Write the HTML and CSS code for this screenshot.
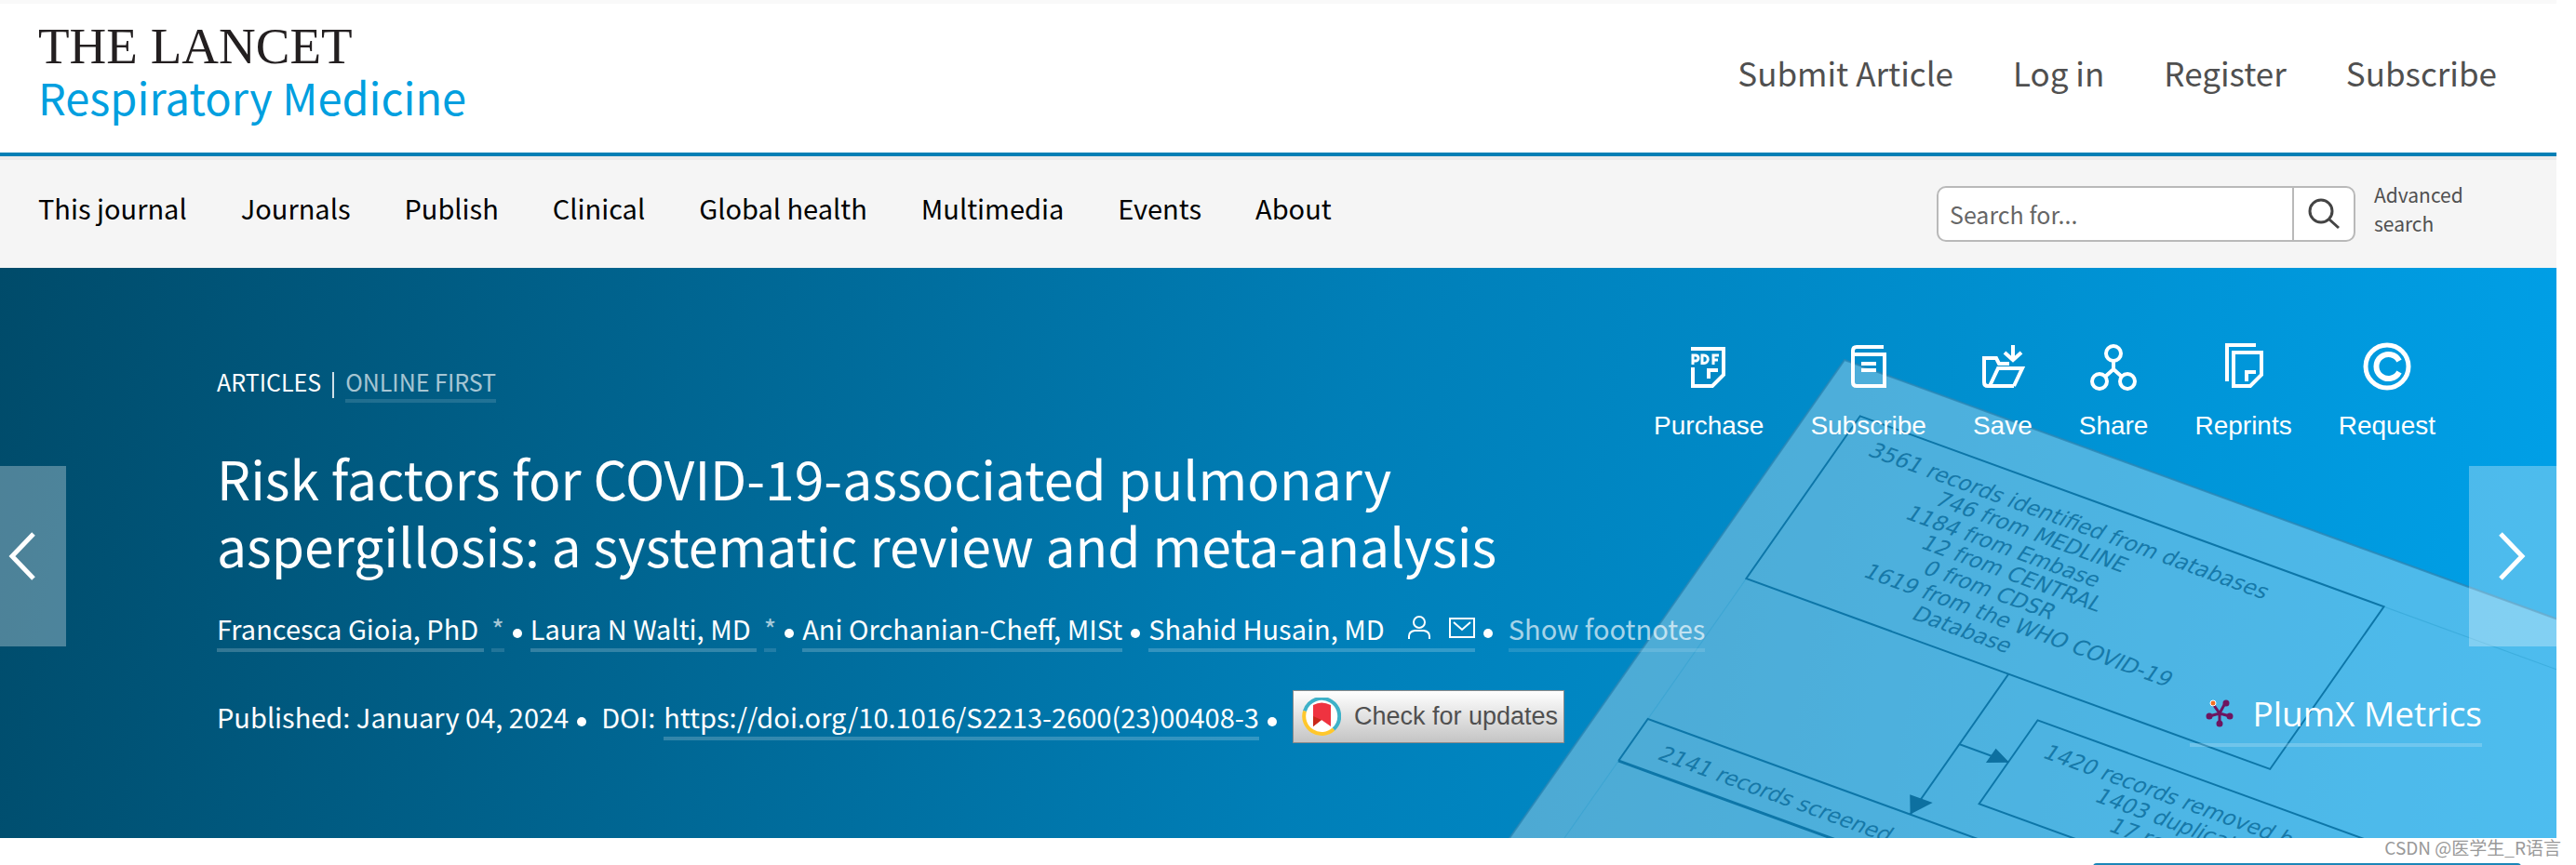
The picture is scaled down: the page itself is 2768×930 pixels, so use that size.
FILE: index.html
```html
<!DOCTYPE html>
<html lang="en">
<head>
    <meta charset="UTF-8">
    <meta name="viewport" content="width=device-width, initial-scale=1.0">
    <title>Risk factors for COVID-19-associated pulmonary aspergillosis - The Lancet Respiratory Medicine</title>
    <link rel="stylesheet" href="styles.css">
</head>
<body>
    <header class="header">
        <a class="logo" href="#">
            <span class="logo-main">THE LANCET</span>
            <span class="logo-sub">Respiratory Medicine</span>
        </a>
        <nav class="user-links">
            <a href="#">Submit Article</a>
            <a href="#">Log in</a>
            <a href="#">Register</a>
            <a href="#">Subscribe</a>
        </nav>
    </header>

    <div class="navbar">
        <nav class="menu">
            <a href="#">This journal</a>
            <a href="#">Journals</a>
            <a href="#">Publish</a>
            <a href="#">Clinical</a>
            <a href="#">Global health</a>
            <a href="#">Multimedia</a>
            <a href="#">Events</a>
            <a href="#">About</a>
        </nav>
        <form class="search">
            <div class="search-box">
                <input class="search-input" type="text" placeholder="Search for..." aria-label="Search for">
                <button class="search-btn" type="button" aria-label="Search">
                    <svg width="34" height="34" viewBox="0 0 34 34" fill="none" stroke="#444" stroke-width="3"><circle cx="14" cy="14" r="12"/><path d="M23 23l10 9"/></svg>
                </button>
            </div>
            <a class="advanced" href="#">Advanced search</a>
        </form>
    </div>

    <main class="hero">
        <!-- tilted figure sheet behind the article header -->
        <svg class="figure" width="1130" height="613" viewBox="0 0 1130 613" aria-hidden="true">
            <g transform="translate(365 99) rotate(20) skewX(-15)">
                <rect width="1600" height="1100" fill="#fff" fill-opacity="0.3" stroke="#2b86b4" stroke-opacity="0.8" stroke-width="2"/>
                <rect x="50" y="51" width="1500" height="1000" fill="none" stroke="#2ba0d0" stroke-opacity="0.5" stroke-width="1"/>
                <g fill="none" stroke="#0d76a8" stroke-width="2">
                    <rect x="50" y="51" width="599" height="206"/>
                    <path d="M1600 435H50v53"/>
                    <path d="M50 488H1600" stroke-width="3"/>
                    <rect x="406" y="293" width="640" height="106"/>
                    <path d="M350 257V435M350 346H406"/>
                </g>
                <path d="M350 435l-13-20h26zM407 346l-21-9v18z" fill="#0d70a0"/>
                <g class="figure-text">
                    <text x="81" y="88">3561 records identified from databases</text>
                    <text x="173" y="113">746 from MEDLINE</text>
                    <text x="155" y="138">1184 from Embase</text>
                    <text x="188" y="162">12 from CENTRAL</text>
                    <text x="206" y="187">0 from CDSR</text>
                    <text x="154" y="212">1619 from the WHO COVID-19</text>
                    <text x="225" y="237">Database</text>
                    <text x="83" y="472">2141 records screened</text>
                    <text x="433" y="329">1420 records removed before screening</text>
                    <text x="508" y="354">1403 duplicate records</text>
                    <text x="540" y="379">17 records excluded</text>
                </g>
            </g>
        </svg>

        <button class="arrow arrow-prev" type="button" aria-label="Previous article">
            <svg width="30" height="52" viewBox="0 0 30 52" fill="none" stroke="#fff" stroke-width="5"><path d="M27 2L4 26l23 24"/></svg>
        </button>
        <button class="arrow arrow-next" type="button" aria-label="Next article">
            <svg width="30" height="52" viewBox="0 0 30 52" fill="none" stroke="#fff" stroke-width="5"><path d="M3 2l23 24L3 50"/></svg>
        </button>

        <div class="hero-top">
            <div class="kicker">
                <span>ARTICLES</span>
                <span class="kicker-sep"></span>
                <a class="underlined dim" href="#">ONLINE FIRST</a>
            </div>
            <div class="tools">
                <a class="tool" href="#">
                    <svg width="52" height="52" viewBox="0 0 52 52" fill="none" stroke="#fff" stroke-width="4">
                        <path d="M7 7h35v28L30 47H9V27M26 37v-7h10M26 28v11"/>
                        <path d="M9 24V14h3a3 3 0 0 1 0 6H9M19 14v8.500h2a4.200 4.200 0 0 0 0-8.500zM31 24V14h6M31 19h5" stroke-width="3"/>
                    </svg>
                    Purchase
                </a>
                <a class="tool" href="#">
                    <svg width="52" height="52" viewBox="0 0 52 52" fill="none" stroke="#fff" stroke-width="4">
                        <path d="M42 5H13q-4 0-4 4v34q0 4 4 4h30V13H9M18 23h16M18 30h16"/>
                    </svg>
                    Subscribe
                </a>
                <a class="tool" href="#">
                    <svg width="52" height="52" viewBox="0 0 52 52" fill="none" stroke="#fff" stroke-width="4">
                        <path d="M38 47H10q-4 0-4-4V17h13l3 6h11M12 47l9-19h26l-9 19M37 3v16M28 11l9 8 9-8"/>
                    </svg>
                    Save
                </a>
                <a class="tool" href="#">
                    <svg width="52" height="52" viewBox="0 0 52 52" fill="none" stroke="#fff" stroke-width="4">
                        <circle cx="26" cy="12" r="8"/><circle cx="11" cy="42" r="8"/><circle cx="41" cy="42" r="8"/>
                        <path d="M26 20v9M17 37l9-8 9 8"/>
                    </svg>
                    Share
                </a>
                <a class="tool" href="#">
                    <svg width="52" height="52" viewBox="0 0 52 52" fill="none" stroke="#fff" stroke-width="4">
                        <path d="M39 3H8v39M15 11h30v24L33 47H15zM29 42V32h10"/>
                    </svg>
                    Reprints
                </a>
                <a class="tool" href="#">
                    <svg width="52" height="52" viewBox="0 0 52 52" fill="none" stroke="#fff" stroke-width="5">
                        <circle cx="26" cy="26" r="23"/>
                        <path d="M39 20a13 13 0 1 0 0 12" stroke-width="6"/>
                    </svg>
                    Request
                </a>
            </div>
        </div>

        <h1 class="title">Risk factors for COVID-19-associated pulmonary aspergillosis: a systematic review and meta-analysis</h1>

        <div class="authors">
            <a class="underlined author" href="#">Francesca Gioia, PhD</a>
            <a class="underlined dim note" href="#">*</a>
            <i class="dot"></i>
            <a class="underlined author" href="#">Laura N Walti, MD</a>
            <a class="underlined dim note" href="#">*</a>
            <i class="dot"></i>
            <a class="underlined" href="#">Ani Orchanian-Cheff, MISt</a>
            <i class="dot"></i>
            <a class="underlined contact" href="#">Shahid Husain, MD
                <svg width="24" height="26" viewBox="0 0 24 26" fill="none" stroke="#fff" stroke-width="2"><circle cx="12" cy="7" r="6"/><path d="M1 25v-3q0-5 6-6h10q6 1 6 6v3"/></svg>
                <svg width="28" height="22" viewBox="0 0 28 22" fill="none" stroke="#fff" stroke-width="2"><path d="M1 1h26v20H1zM5 5l9 8 9-8"/></svg>
            </a>
            <i class="dot"></i>
            <a class="underlined dim footnotes" href="#">Show footnotes</a>
        </div>

        <div class="hero-bottom">
            <div class="published">
                <span>Published: January 04, 2024</span>
                <i class="dot"></i>
                <span class="doi-label">DOI:</span>
                <a class="underlined" href="#">https://doi.org/10.1016/S2213-2600(23)00408-3</a>
                <i class="dot"></i>
            </div>
            <button class="updates" type="button">
                <svg width="42" height="42" viewBox="0 0 42 42" fill="none">
                    <circle cx="21" cy="21" r="18" fill="#fff"/>
                    <path d="M3 14.500A19 19 0 1 1 34 34" stroke="#3eb1c8" stroke-width="4"/>
                    <path d="M34 34A19 19 0 0 1 3 14.500" stroke="#ffc72c" stroke-width="4"/>
                    <path d="M12 8q9-5 19 0v23l-10-7-9 7z" fill="#ef3340"/>
                    <path d="M12 20l9 4-9 7z" fill="#c9281a"/>
                </svg>
                Check for updates
            </button>
            <a class="underlined plumx" href="#">
                <svg width="30" height="30" viewBox="0 0 30 30" stroke="#6e1560" stroke-width="3" fill="#6e1560">
                    <path d="M15 15L8 5M15 15l6-11M15 15l11 3M15 15v11M15 15L4 18" />
                    <circle cx="22" cy="4" r="2"/><circle cx="26" cy="18" r="2"/><circle cx="15" cy="26" r="2"/><circle cx="4" cy="18" r="2"/>
                    <circle cx="8" cy="4" r="3" fill="#f36f21" stroke="#fff" stroke-width="1"/>
                </svg>
                PlumX Metrics
            </a>
        </div>
    </main>

    <div class="content">
        <div class="side-panel"></div>
    </div>
    <div class="watermark">CSDN @医学生_R语言</div>
</body>
</html>
```
FILE: styles.css
```css
* { box-sizing: border-box; }
html { overflow: hidden; }
body { margin: 0; padding-right: 21px; background: #fff; font-family: "Noto Sans CJK SC", "Open Sans", sans-serif; position: relative; }
a { color: inherit; text-decoration: none; }
svg { display: block; flex: none; }
button { font-family: inherit; border: none; padding: 0; cursor: pointer; }

.header { display: flex; justify-content: space-between; align-items: flex-start; height: 168px; padding: 16px 64px 0 41px; border-top: 4px solid #f9f9f9; border-bottom: 4px solid #007fb5; }
.logo { display: flex; flex-direction: column; }
.logo-main { font-family: "Liberation Serif", serif; font-size: 55px; line-height: 60px; color: #231f20; }
.logo-sub { font-size: 47px; line-height: 48px; color: #009fdf; }
.user-links { display: flex; gap: 64px; margin-top: 34px; font-size: 35px; line-height: 48px; color: #505050; }

.navbar { display: flex; justify-content: space-between; align-items: flex-start; height: 120px; padding: 28px 88px 0 41px; background: #f5f5f5; border-top: 4px solid #ebebeb; }
.menu { display: flex; gap: 58px; margin-top: 3px; font-size: 29px; line-height: 40px; color: #000; }
.search { display: flex; gap: 20px; margin: 0; }
.search-box { display: flex; width: 450px; height: 60px; background: #fff; border: 2px solid #b9b9b9; border-radius: 10px; overflow: hidden; }
.search-input { flex: 1; min-width: 0; border: none; outline: none; padding: 0 12px; font-family: inherit; font-size: 25px; color: #505050; background: none; }
.search-input::placeholder { color: #666; opacity: 1; }
.search-btn { display: flex; align-items: center; justify-content: center; width: 66px; background: none; border-left: 2px solid #b9b9b9; }
.advanced { width: 108px; font-size: 21px; line-height: 31px; margin-top: -6px; color: #505050; }

.hero { position: relative; overflow: hidden; height: 613px; padding: 80px 80px 0 233px; color: #fff; background: linear-gradient(100deg, #004b6a 0%, #007fb8 52%, #00a1e9 100%); }
.figure { position: absolute; top: 0; right: 0; }
.figure-text { font-family: "DejaVu Sans", sans-serif; font-size: 23px; fill: #0d6f9f; opacity: 0.85; }
.arrow { position: absolute; top: 213px; display: flex; align-items: center; height: 194px; background: rgba(255, 255, 255, 0.3); }
.arrow-prev { left: 0; width: 71px; padding-left: 9px; }
.arrow-next { right: 0; width: 94px; padding-left: 31px; }

.underlined { display: inline-block; padding-bottom: 3px; border-bottom: 4px solid rgba(255, 255, 255, 0.2); }
.dim { opacity: 0.65; }
.dot { flex: none; width: 10px; height: 10px; border-radius: 50%; background: #fff; margin: 19px 9px 0; }

.hero-top { position: relative; display: flex; justify-content: space-between; align-items: flex-start; margin-right: 50px; }
.kicker { display: flex; margin-top: 26px; font-size: 25px; line-height: 32px; }
.kicker-sep { width: 2px; height: 28px; margin: 6px 12px 0; background: #cfe0e8; }
.tools { display: flex; gap: 50px; font-family: "Liberation Sans", sans-serif; font-size: 28px; line-height: 32px; }
.tool { display: flex; flex-direction: column; align-items: center; gap: 22px; }

.title { position: relative; max-width: 1480px; margin: 3px 0 36px; font-size: 57px; line-height: 72px; font-weight: 400; }

.authors { position: relative; display: flex; align-items: flex-start; font-size: 29px; line-height: 36px; }
.authors .underlined { padding-bottom: 4px; }
.authors .author { padding-right: 6px; }
.note { margin-left: 8px; }
.contact { display: flex; align-items: center; gap: 20px; }
.contact svg:first-of-type { margin-left: 5px; }
.footnotes { margin-left: 8px; }

.hero-bottom { position: relative; display: flex; align-items: flex-start; margin-top: 41px; }
.published { display: flex; align-items: flex-start; margin-top: 10px; font-size: 29px; line-height: 36px; }
.published .underlined { padding-bottom: 4px; }
.doi-label { margin: 0 9px 0 7px; }
.updates { display: flex; align-items: center; gap: 14px; width: 292px; height: 57px; margin-left: 8px; padding: 0 9px; font-family: "Liberation Sans", sans-serif; font-size: 27px; color: #505050; white-space: nowrap; background: linear-gradient(#fff, #c4c4c4); border: 1px solid #8a8a8a; }
.plumx { display: flex; align-items: center; gap: 20px; margin: 3px 0 0 auto; padding: 0 0 10px 17px; font-family: "Open Sans", sans-serif; font-size: 37px; line-height: 44px; }

.content { display: flex; justify-content: flex-end; padding: 27px 38px 0 0; }
.side-panel { width: 460px; height: 40px; border-top: 2px solid #1b86b8; border-radius: 4px 4px 0 0; }
.watermark { position: absolute; top: 897px; right: 16px; font-size: 19px; line-height: 28px; color: #999; }
```
